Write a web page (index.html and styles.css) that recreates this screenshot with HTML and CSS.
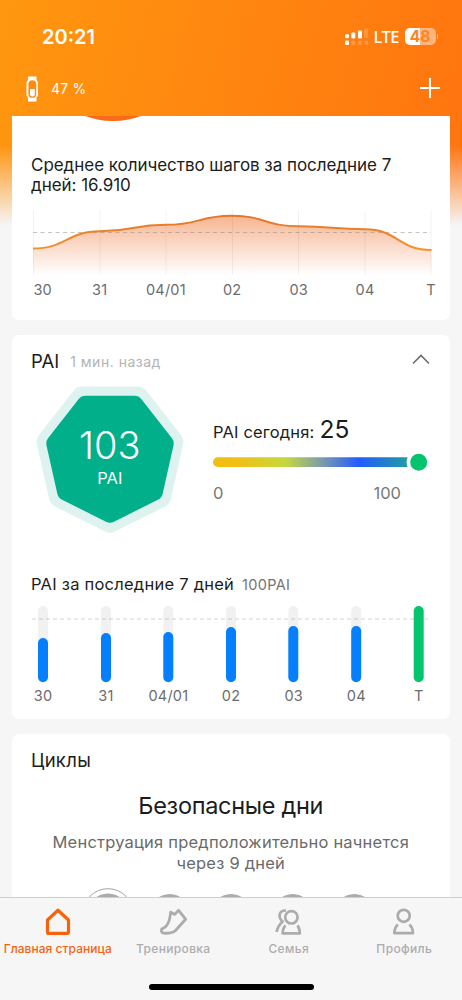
FILE: index.html
```html
<!DOCTYPE html>
<html lang="ru">
<head>
<meta charset="utf-8">
<meta name="viewport" content="width=device-width, initial-scale=1">
<title>Главная страница</title>
<link rel="stylesheet" href="styles.css">
</head>
<body>
<header class="top">
  <div class="status">
    <span class="clock">20:21</span>
    <div class="status-right">
      <svg class="signal" width="25" height="18" viewBox="0 0 25 18">
        <g fill="#fff"><rect x="1" y="6.200" width="4" height="4" rx="1"/><rect x="1" y="12.500" width="4" height="4.500" rx="1"/><rect x="7.300" y="4.500" width="4" height="6" rx="1"/><rect x="14" y="2.500" width="4" height="8" rx="1"/></g>
        <g fill="#fff" opacity=".2"><rect x="20.200" y=".5" width="4" height="9.500" rx="1"/><rect x="7.300" y="12.700" width="4" height="4" rx="1"/><rect x="14" y="12.700" width="4" height="4" rx="1"/><rect x="20.200" y="12.700" width="4" height="4" rx="1"/></g>
      </svg>
      <span class="lte">LTE</span>
      <span class="battery"><span class="battery-body">48</span><span class="battery-tip"></span></span>
    </div>
  </div>
  <div class="device">
    <svg width="13" height="26" viewBox="0 0 13 26">
      <path d="M2 .5h8.500v3.500L12 6.500v13L10.500 22v3.500H2V22L.5 19.500v-13L2 4z" fill="#fff"/>
      <rect x="2.400" y="4.200" width="7.800" height="17.600" rx="3.900" fill="#ff8c10"/>
      <path d="M4 13h4.800v5.200a2.400 2.400 0 0 1-4.800 0z" fill="#fff"/>
    </svg>
    <span class="device-level">47 %</span>
    <svg class="plus" width="22" height="22" viewBox="0 0 22 22"><path d="M11 1v20M1 11h20" stroke="#fff" stroke-width="2"/></svg>
  </div>
</header>

<main class="feed">
  <section class="card steps">
    <svg class="steps-arc" width="60" height="6" viewBox="0 0 60 6"><circle cx="30" cy="-74.500" r="79.500" fill="#fb6a18"/></svg>
    <p class="steps-text">Среднее количество шагов за последние 7 дней: 16.910</p>
    <svg class="chart" width="437" height="100" viewBox="12 205 437 100">
      <defs>
        <linearGradient id="area" gradientUnits="userSpaceOnUse" x1="0" y1="215" x2="0" y2="275"><stop offset="0" stop-color="#f7b48e"/><stop offset=".5" stop-color="#fbd9c7"/><stop offset="1" stop-color="#fff"/></linearGradient>
        <linearGradient id="line" gradientUnits="userSpaceOnUse" x1="0" y1="215" x2="0" y2="250"><stop offset="0" stop-color="#e5742b"/><stop offset="1" stop-color="#f3922a"/></linearGradient>
      </defs>
      <path fill="url(#area)" d="M33 248.500C66 248.500 67 231.300 100 231.300S133 224.800 166 224.800S199 215.800 232 215.800S265 226.300 298.500 226.300S332 229.300 365 229.300S398 250 431.500 250V275H33Z"/>
      <path stroke="#000" stroke-opacity=".05" d="M33.500 210v65M100 210v65M166 210v65M232.500 210v65M298.500 210v65M365 210v65M431 210v65"/>
      <path stroke="#888" stroke-opacity=".5" stroke-dasharray="4 3.500" d="M33 232.500H431"/>
      <path fill="none" stroke="url(#line)" stroke-width="1.900" d="M33 248.500C66 248.500 67 231.300 100 231.300S133 224.800 166 224.800S199 215.800 232 215.800S265 226.300 298.500 226.300S332 229.300 365 229.300S398 250 431.500 250"/>
      <g class="axis"><text x="42.700" y="295">30</text><text x="99.700" y="295">31</text><text x="165.900" y="295">04/01</text><text x="232.200" y="295">02</text><text x="298.700" y="295">03</text><text x="365" y="295">04</text><text x="431" y="295">T</text></g>
    </svg>
  </section>

  <section class="card pai">
    <div class="pai-head">
      <h2 class="card-title">PAI</h2><span class="ago">1 мин. назад</span>
      <svg class="chevron" width="18" height="11" viewBox="0 0 18 11"><path d="M1 9.500 9 1.500l8 8" fill="none" stroke="#6e6e6e" stroke-width="1.600"/></svg>
    </div>
    <div class="pai-body">
      <div class="badge">
        <svg class="badge-shape" width="148" height="148" viewBox="-74 -70.200 148 148" stroke-linejoin="round">
          <path d="M0 65.500 50.100 40.500 62.400-14.500 27.800-58.600H-27.800L-62.400-14.500-50.100 40.500Z" fill="#def3f0" stroke="#def3f0" stroke-width="22"/>
          <path d="M0 57.400 43.900 35.500 54.700-12.700 24.400-51.400H-24.400L-54.700-12.700-43.900 35.500Z" fill="#02af8b" stroke="#02af8b" stroke-width="18"/>
        </svg>
        <div class="badge-text"><span class="score">103</span><span class="unit">PAI</span></div>
      </div>
      <div class="gauge">
        <div class="today"><span>PAI сегодня:</span><b>25</b></div>
        <svg width="216" height="39" viewBox="213 444 216 39">
          <defs><linearGradient id="range" gradientUnits="userSpaceOnUse" x1="213" y1="0" x2="407" y2="0"><stop offset="0" stop-color="#f4bc10"/><stop offset=".12" stop-color="#f1bf15"/><stop offset=".37" stop-color="#c6d83c"/><stop offset=".56" stop-color="#7d9dab"/><stop offset=".75" stop-color="#245bfc"/><stop offset="1" stop-color="#1f9ba5"/></linearGradient></defs>
          <rect x="213" y="457.300" width="204" height="9.700" rx="4.850" fill="url(#range)"/>
          <circle cx="418.700" cy="462.300" r="10.300" fill="#04c46d" stroke="#fff" stroke-width="3.600"/>
        </svg>
        <div class="scale"><span>0</span><span>100</span></div>
      </div>
    </div>
    <div class="week"><h3 class="week-title">PAI за последние 7 дней</h3><span class="week-limit">100PAI</span></div>
    <svg class="chart" width="437" height="110" viewBox="12 600 437 110">
      <g stroke-width="10" stroke-linecap="round">
        <path stroke="#f1f1f1" d="M43 611v66M106 611v66M168.300 611v66M231 611v66M293.300 611v66M356.200 611v66"/>
        <path stroke="#0480ff" d="M43 643v34.300M106 638v39.300M168.300 637v40.300M231 632v45.300M293.300 631v46.300M356.200 631v46.300"/>
        <path stroke="#04c46d" d="M418.700 611v66.300"/>
      </g>
      <path stroke="#888" stroke-opacity=".36" stroke-width="1.200" stroke-dasharray="4 3" d="M32 619H428"/>
      <g class="axis"><text x="43" y="701.300">30</text><text x="105.900" y="701.300">31</text><text x="168.400" y="701.300">04/01</text><text x="231" y="701.300">02</text><text x="293.700" y="701.300">03</text><text x="356.300" y="701.300">04</text><text x="418.800" y="701.300">T</text></g>
    </svg>
  </section>

  <section class="card cycles">
    <h2 class="card-title cycles-title">Циклы</h2>
    <p class="safe">Безопасные дни</p>
    <p class="forecast">Менструация предположительно начнется<br>через 9 дней</p>
    <svg class="days" width="437" height="50" viewBox="12 885 437 50">
      <circle cx="108" cy="914" r="25.300" fill="none" stroke="#a5a5a5"/>
      <g fill="#acacac"><circle cx="108" cy="914" r="20.600"/><circle cx="169.700" cy="914" r="20"/><circle cx="231" cy="914" r="20"/><circle cx="292.700" cy="914" r="20"/><circle cx="354.300" cy="914" r="20"/></g>
    </svg>
  </section>
</main>

<nav class="tabs">
  <a class="tab tab-active">
    <svg width="30" height="30" viewBox="0 0 30 30"><path d="M15 4.300 25.500 14V26.200a1.200 1.200 0 0 1-1.200 1.200H5.700a1.200 1.200 0 0 1-1.200-1.200V14Z" stroke-width="3.200"/></svg>
    <span class="home-label">Главная страница</span>
  </a>
  <a class="tab">
    <svg width="30" height="30" viewBox="0 0 30 30"><path d="M12.700 6.200 16.800 8.400 20.600 4.300 27.600 13.200 17.300 24.800C14.500 27.300 9 27.400 5.500 27.200C3.200 27 3 24.200 3.900 22.800C7.700 21.500 10 18.200 11.200 14.300C12 11.800 12.200 9 12.700 6.200Z" stroke-width="2.800"/></svg>
    <span>Тренировка</span>
  </a>
  <a class="tab">
    <svg width="30" height="30" viewBox="0 0 30 30"><g stroke-width="2.700"><circle cx="17.400" cy="11.300" r="6.200"/><path d="M11.500 19.500C9.500 21.300 8.800 23.500 8.600 27.300H25.900C25.700 23.500 25 21.300 23.400 19.500"/><path d="M12 4.500C4.500 4.300 3.800 11.300 8.600 15.600C5.500 18.500 3.500 21 2.700 26"/></g></svg>
    <span>Семья</span>
  </a>
  <a class="tab">
    <svg width="30" height="30" viewBox="0 0 30 30"><g stroke-width="2.700"><circle cx="14.700" cy="9.800" r="6"/><path d="M9 18.600C6.500 20.300 5.600 22.800 5.300 27.200H24C23.800 22.800 22.800 20.300 20.300 18.600"/></g></svg>
    <span>Профиль</span>
  </a>
  <div class="home-indicator"></div>
</nav>
</body>
</html>
```

FILE: styles.css
```css
* { box-sizing: border-box; }
body {
  margin: 0;
  width: 462px;
  height: 1000px;
  overflow: hidden;
  display: flex;
  flex-direction: column;
  font-family: Inter, "Noto Sans", sans-serif;
  color: #1c1c1c;
  background:
    linear-gradient(180deg, rgba(246,246,246,0) 145px, #f6f6f6 226px),
    linear-gradient(105deg, #ff970f 0%, #ff8610 48%, #ff730f 100%);
  background-size: 462px 1000px, 462px 230px;
  background-repeat: no-repeat;
}
h2, h3, p { margin: 0; font-weight: 400; }
svg { display: block; flex: none; }

.top { height: 116px; flex: none; color: #fff; }
.status { height: 60px; padding: 13px 24px 0 42px; display: flex; justify-content: space-between; }
.clock { font-size: 20px; line-height: 48px; font-weight: 600; letter-spacing: 0; }
.status-right { display: flex; align-items: center; height: 47px; }
.signal { margin-right: 5px; }
.lte { font: 500 16.5px/20px "Noto Sans", sans-serif; letter-spacing: -.5px; margin-right: 6px; width: 25px; }
.battery { display: flex; align-items: center; gap: 1px; }
.battery-body {
  width: 31px; height: 17.500px; border-radius: 5px;
  background: linear-gradient(90deg, #fff 48%, rgba(255,255,255,.45) 48%);
  color: #fb851e; font-size: 15.500px; font-weight: 700; line-height: 17.500px; text-align: center;
}
.battery-tip { width: 1.500px; height: 5px; border-radius: 0 2px 2px 0; background: rgba(255,255,255,.5); }
.device { display: flex; align-items: center; height: 56px; padding: 1px 21px 0 26px; }
.device-level { font-size: 14px; margin-left: 12px; letter-spacing: .2px; }
.plus { margin: -1px 0 0 auto; }

.feed { flex: 1; min-height: 0; overflow: hidden; padding: 0 12.500px 0 12px; display: flex; flex-direction: column; gap: 15px; }
.card { flex: none; background: #fff; border-radius: 7px; overflow: hidden; }
.steps { height: 204px; border-radius: 0 0 7px 7px; }
.steps-arc { margin-left: 71px; }
.steps-text { padding: 32.500px 40px 0 19px; font-size: 17px; line-height: 20.500px; letter-spacing: -.04px; }
.steps .chart { margin-top: 9.500px; }
.axis { font-size: 14.500px; letter-spacing: .2px; fill: #6c6c6c; text-anchor: middle; }

.pai { height: 384px; }
.pai-head { display: flex; align-items: center; height: 52px; padding: 0 19px; }
.card-title { font-size: 18.500px; line-height: 24px; }
.ago { font-size: 14px; color: #b3b3b3; margin: 1px 0 0 11px; letter-spacing: .5px; }
.chevron { margin: -4px 1px 0 auto; }
.pai-body { display: flex; height: 146px; padding: 0 20px 0 24px; }
.badge { display: grid; width: 147px; }
.badge-shape, .badge-text { grid-area: 1 / 1; }
.badge-shape { margin: -.8px 0 0 -.5px; }
.badge-text { display: flex; flex-direction: column; align-items: center; color: #fff; padding-top: 37px; z-index: 1; }
.score { font-size: 38px; line-height: 43px; font-weight: 300; }
.unit { font-size: 16.500px; line-height: 22px; }
.gauge { margin-left: 30px; padding-top: 27px; width: 216px; }
.today { display: flex; align-items: baseline; gap: 5px; font-size: 16.500px; letter-spacing: .15px; line-height: 31px; height: 30px; }
.today b { font-size: 24.500px; font-weight: 400; line-height: 31px; letter-spacing: 0; }
.scale { display: flex; justify-content: space-between; padding-right: 28px; font-size: 16.500px; line-height: 20px; color: #777; }
.week { display: flex; align-items: baseline; gap: 8px; padding: 41px 19px 0; }
.week-title { font-size: 16.500px; line-height: 20px; letter-spacing: .24px; }
.week-limit { font-size: 14.500px; line-height: 20px; letter-spacing: .3px; color: #747474; }
.pai .chart { margin-top: 5px; }

.cycles { height: 200px; text-align: center; }
.cycles-title { padding: 14px 19px 0; text-align: left; letter-spacing: .3px; }
.safe { font-size: 23.500px; line-height: 30px; margin-top: 19px; letter-spacing: -.3px; }
.forecast { font-size: 16.500px; line-height: 20.500px; margin-top: 11px; letter-spacing: .21px; color: #6a6a6a; }
.days { margin-top: 12px; }

.tabs {
  flex: none; height: 103px; padding-top: 8px; border-top: 1px solid #cfcfcf; background: #f6f6f6;
  display: grid; grid-template-columns: repeat(4, 115.500px); grid-template-rows: 78px auto;
}
.tab { display: flex; flex-direction: column; align-items: center; gap: 5px; color: #acacac; font-size: 12px; line-height: 18px; font-weight: 500; letter-spacing: .35px; white-space: nowrap; }
.tab svg { fill: none; stroke: currentColor; stroke-linejoin: round; }
.tab span { margin-top: -1px; }
.tab-active { color: #f7630c; letter-spacing: .05px; }
.home-indicator { grid-column: 1 / -1; justify-self: center; width: 165px; height: 6px; border-radius: 3px; background: #000; }
```
